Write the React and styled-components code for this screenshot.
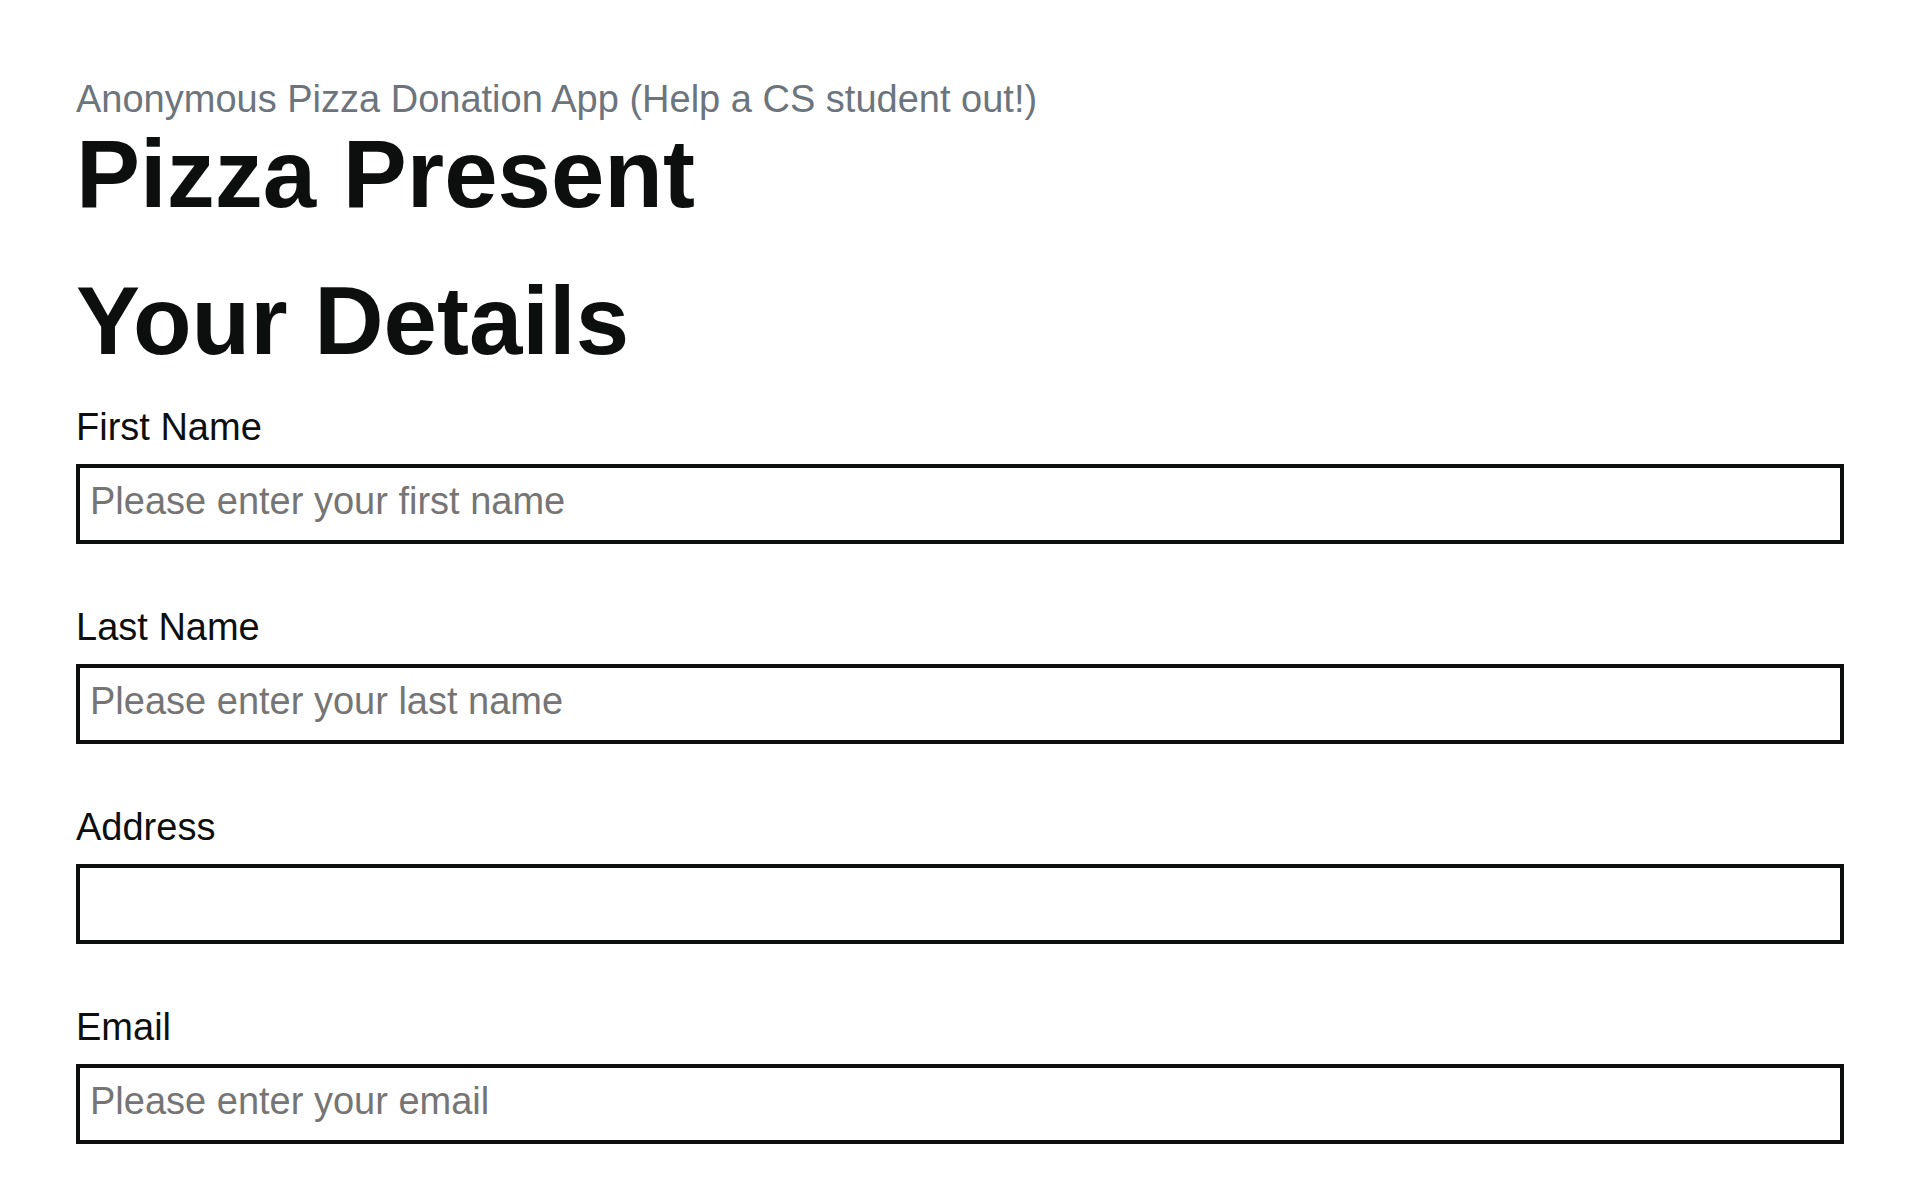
import React from "react";
import styled, { createGlobalStyle } from "styled-components";

const GlobalStyle = createGlobalStyle`
  * {
    box-sizing: border-box;
  }
  body {
    margin: 0;
    background: #ffffff;
    font-family: "Liberation Sans", Arial, sans-serif;
    color: #0d0f0e;
  }
`;

const Page = styled.main`
  padding: 76px 76px 56px;
`;

const Subtitle = styled.p`
  margin: 0;
  font-size: 38px;
  line-height: 46px;
  color: #6c757d;
`;

const Heading = styled.h1`
  margin: ${(p) => (p.$section ? "43px 0 0" : "0")};
  font-size: 96px;
  line-height: 104px;
  font-weight: 700;
  color: #0d0f0e;
`;

const Form = styled.form`
  display: flex;
  flex-direction: column;
  gap: 60px;
  margin-top: 31px;
`;

const Field = styled.div`
  display: flex;
  flex-direction: column;
  gap: 14px;
`;

const Label = styled.label`
  font-size: 38px;
  line-height: 46px;
  color: #0d0f0e;
`;

const Input = styled.input`
  width: 100%;
  height: 80px;
  padding: 0 10px 6px;
  border: 4px solid #0d0f0e;
  border-radius: 0;
  font-family: inherit;
  font-size: 38px;
  color: #0d0f0e;
  background: #ffffff;
  outline: none;

  &::placeholder {
    color: #757575;
  }
`;

const fields = [
  { id: "firstName", label: "First Name", placeholder: "Please enter your first name" },
  { id: "lastName", label: "Last Name", placeholder: "Please enter your last name" },
  { id: "address", label: "Address", placeholder: "" },
  { id: "email", label: "Email", placeholder: "Please enter your email", type: "email" },
];

export default function App() {
  return (
    <>
      <GlobalStyle />
      <Page>
        <Subtitle>Anonymous Pizza Donation App (Help a CS student out!)</Subtitle>
        <Heading>Pizza Present</Heading>
        <Heading as="h2" $section>
          Your Details
        </Heading>
        <Form onSubmit={(e) => e.preventDefault()}>
          {fields.map((f) => (
            <Field key={f.id}>
              <Label htmlFor={f.id}>{f.label}</Label>
              <Input id={f.id} type={f.type || "text"} placeholder={f.placeholder} />
            </Field>
          ))}
        </Form>
      </Page>
    </>
  );
}
